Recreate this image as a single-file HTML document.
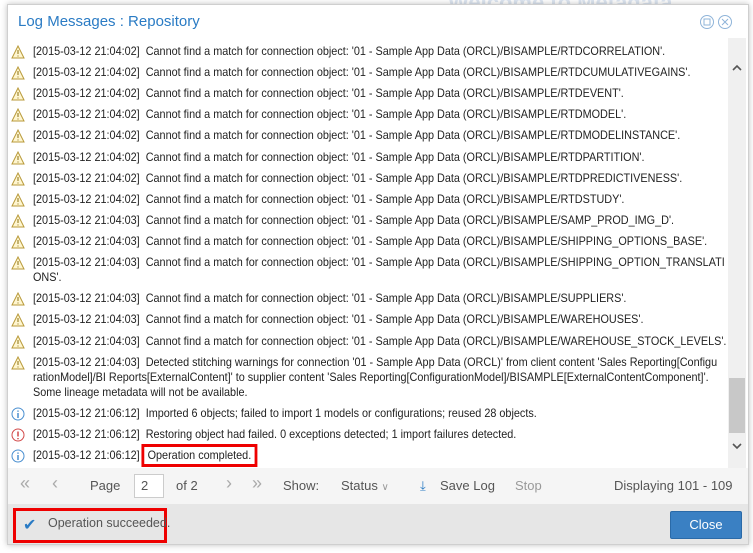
<!DOCTYPE html><html><head><style>
body{margin:0;width:753px;height:553px;background:#fff;position:relative;overflow:hidden;font-family:"Liberation Sans",sans-serif;}
.bgt{position:absolute;color:#dde6f2;font-size:22px;font-weight:bold;left:448px;top:-10px}
.dlg{position:absolute;left:7px;top:4px;width:740px;height:539px;background:#fff;border:1px solid #cfcfcf;box-shadow:0 0 6px rgba(0,0,0,.25)}
.hd{position:absolute;left:10px;top:8px;font-size:15px;color:#2a7bc4}
.log{position:absolute;left:0;top:33px;width:720px;height:430px;font-size:11.6px;color:#222;overflow:hidden}
.r{position:absolute;left:25px;line-height:15px;white-space:nowrap;transform:scaleX(0.935);transform-origin:0 0}
.ic{position:absolute;left:3px;width:14px;height:14px}
.sb{position:absolute;left:720px;top:33px;width:18px;height:430px;background:#f0f0f0}
.pg{position:absolute;left:0;top:463px;width:740px;height:36px;background:#f5f5f5;font-size:13px;color:#555}
.ft{position:absolute;left:0;top:499px;width:740px;height:40px;background:#e6e6e6}
.p{position:absolute;top:10px}
</style></head><body>
<div class="bgt">Welcome to Metadata Manager</div>
<div class="dlg">
<div class="hd">Log Messages : Repository</div>
<svg style="position:absolute;left:691px;top:9px" width="40" height="16"><circle cx="8" cy="8" r="6.5" fill="none" stroke="#8fb4d9"/><rect x="5" y="5" width="6" height="6" fill="none" stroke="#8fb4d9"/><circle cx="26" cy="8" r="6.5" fill="none" stroke="#8fb4d9"/><path d="M23 5l6 6M29 5l-6 6" stroke="#8fb4d9"/></svg>
<div class="log" id="log"></div>
<div class="sb"><svg style="position:absolute;left:4px;top:26px" width="10" height="8"><path d="M1 6l4-4 4 4" stroke="#555" stroke-width="1.6" fill="none"/></svg><div style="position:absolute;left:1px;top:340px;width:16px;height:55px;background:#c8c8c8"></div><svg style="position:absolute;left:4px;top:404px" width="10" height="8"><path d="M1 2l4 4 4-4" stroke="#555" stroke-width="1.6" fill="none"/></svg></div>
<div class="pg">
<span class="p" style="left:12px;color:#aaa;font-size:18px;top:5px">«</span><span class="p" style="left:44px;color:#aaa;font-size:18px;top:5px">‹</span>
<span class="p" style="left:82px">Page</span>
<div style="position:absolute;left:126px;top:6px;width:28px;height:22px;border:1px solid #ccc;background:#fff"><span style="position:absolute;left:6px;top:3px">2</span></div>
<span class="p" style="left:168px">of 2</span>
<span class="p" style="left:218px;color:#aaa;font-size:18px;top:5px">›</span><span class="p" style="left:244px;color:#aaa;font-size:18px;top:5px">»</span>
<span class="p" style="left:275px">Show:</span><span class="p" style="left:333px">Status <span style="color:#999;font-size:10px">∨</span></span>
<span class="p" style="left:412px;color:#2a7bc4">⤓</span><span class="p" style="left:432px">Save Log</span>
<span class="p" style="left:507px;color:#999">Stop</span>
<span class="p" style="left:606px">Displaying 101 - 109</span>
</div>
<div class="ft">
<div style="position:absolute;left:5px;top:4px;width:148px;height:29px;border:3px solid #e00"></div>
<span style="position:absolute;left:15px;top:11px;color:#2a7bc4">✔</span>
<span style="position:absolute;left:40px;top:12px;font-size:12.5px;color:#555">Operation succeeded.</span>
<div style="position:absolute;left:662px;top:7px;width:70px;height:26px;background:#3a80c3;border:1px solid #2a6aa8;border-radius:2px;color:#fff;font-size:13px;text-align:center;line-height:26px">Close</div>
</div>
</div>
<script>
var W='<svg class="ic" viewBox="0 0 14 14"><path d="M7 1L13 13H1Z" fill="#fff6d0" stroke="#b89a3a"/><path d="M7 5v4M7 10.5v1" stroke="#8a6d10"/></svg>';
var I='<svg class="ic" viewBox="0 0 14 14"><circle cx="7" cy="7" r="6" fill="#fff" stroke="#4a8fd0"/><path d="M7 6v5M7 3.5v1.2" stroke="#4a8fd0" stroke-width="1.5"/></svg>';
var E='<svg class="ic" viewBox="0 0 14 14"><circle cx="7" cy="7" r="6" fill="#fff" stroke="#d24a4a"/><path d="M7 3.5v5M7 10v1.3" stroke="#d24a4a" stroke-width="1.5"/></svg>';
var c="Cannot find a match for connection object: '01 - Sample App Data (ORCL)/BISAMPLE/";
var t1="[2015-03-12 21:04:02]&nbsp; ",t3="[2015-03-12 21:04:03]&nbsp; ",t6="[2015-03-12 21:06:12]&nbsp; ";
var rows=[[6,W,t1+c+"RTDCORRELATION'."],[27,W,t1+c+"RTDCUMULATIVEGAINS'."],[48,W,t1+c+"RTDEVENT'."],[69,W,t1+c+"RTDMODEL'."],[90,W,t1+c+"RTDMODELINSTANCE'."],[112,W,t1+c+"RTDPARTITION'."],[133,W,t1+c+"RTDPREDICTIVENESS'."],[154,W,t1+c+"RTDSTUDY'."],[175,W,t3+c+"SAMP_PROD_IMG_D'."],[196,W,t3+c+"SHIPPING_OPTIONS_BASE'."],[217,W,t3+c+"SHIPPING_OPTION_TRANSLATI<br>ONS'."],[253,W,t3+c+"SUPPLIERS'."],[274,W,t3+c+"WAREHOUSES'."],[296,W,t3+c+"WAREHOUSE_STOCK_LEVELS'."],[317,W,t3+"Detected stitching warnings for connection '01 - Sample App Data (ORCL)' from client content 'Sales Reporting[Configu<br>rationModel]/BI Reports[ExternalContent]' to supplier content 'Sales Reporting[ConfigurationModel]/BISAMPLE[ExternalContentComponent]'.<br>Some lineage metadata will not be available."],[368,I,t6+"Imported 6 objects; failed to import 1 models or configurations; reused 28 objects."],[389,E,t6+"Restoring object had failed. 0 exceptions detected; 1 import failures detected."],[410,I,t6+"<span style='outline:3px solid #e00;outline-offset:2px;padding:0 2px'>Operation completed.</span>"]];
var h="";rows.forEach(function(r){h+='<div style="position:absolute;top:'+(r[0]+1)+'px;left:0">'+r[1]+'</div><div class="r" style="top:'+r[0]+'px">'+r[2]+'</div>';});
document.getElementById('log').innerHTML=h;
</script>
</body></html>
